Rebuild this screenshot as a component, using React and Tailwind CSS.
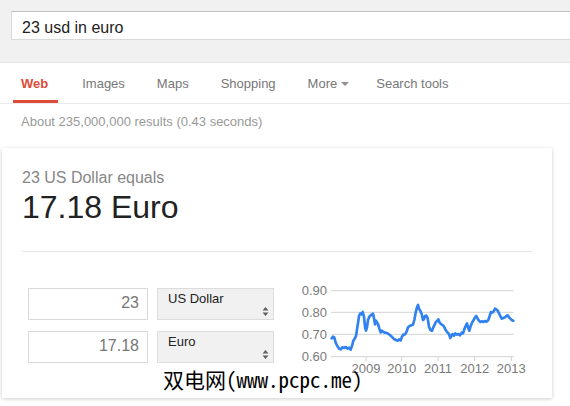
import React from "react";

const PTS =
  "140,205 144,200 148,203 152,218 157,228 162,236 167,238 172,232 177,234 182,231 187,236 192,233 197,239 201,228 205,212 209,206 213,198 216,178 219,160 222,138 226,130 230,133 233,126 237,140 240,170 243,182 246,172 249,150 253,140 257,136 261,133 264,131 267,145 270,163 273,152 276,158 279,162 283,175 287,187 291,182 295,186 300,188 306,189 312,193 318,198 323,203 328,208 333,210 338,212 343,208 347,211 351,200 355,194 360,193 365,185 369,172 374,168 379,166 384,164 388,150 392,128 396,112 399,105 402,116 406,122 410,132 414,150 417,147 420,138 424,137 428,145 432,170 436,180 441,182 445,172 449,164 452,157 456,153 460,148 464,158 468,162 472,165 476,168 480,176 484,183 488,188 492,192 496,204 499,198 503,192 507,197 511,190 515,194 520,192 525,196 530,188 534,190 538,178 542,168 546,160 550,175 553,182 557,168 561,158 566,150 570,142 574,138 578,146 582,152 586,156 590,154 595,156 600,153 605,155 610,150 614,138 618,126 622,128 626,124 630,116 634,118 638,122 642,130 646,138 650,146 655,144 660,142 664,138 668,136 672,142 676,146 680,150 685,152";

function Chart() {
  const grid = [
    { y: 62, l: "0.90" },
    { y: 127, l: "0.80" },
    { y: 193, l: "0.70" },
    { y: 260, l: "0.60" },
  ];
  const years = [
    { x: 243, l: "2009" },
    { x: 350, l: "2010" },
    { x: 459, l: "2011" },
    { x: 569, l: "2012" },
    { x: 679, l: "2013" },
  ];
  return (
    <svg
      width="232"
      height="100"
      viewBox="39 30 696 300"
      className="ml-[24px] shrink-0"
    >
      {grid.map((g) => (
        <g key={g.l}>
          <line x1="138" x2="686" y1={g.y} y2={g.y} stroke="#d4d4d4" strokeWidth="3" />
          <text
            x="126"
            y={g.y + 14}
            textAnchor="end"
            fontSize="39"
            fill="#7a7a7a"
            fontFamily="Liberation Sans, Arial, sans-serif"
          >
            {g.l}
          </text>
        </g>
      ))}
      {years.map((y) => (
        <g key={y.l}>
          <line x1={y.x} x2={y.x} y1="260" y2="273" stroke="#cfcfcf" strokeWidth="3" />
          <text
            x={y.x}
            y="309"
            textAnchor="middle"
            fontSize="39"
            fill="#7a7a7a"
            fontFamily="Liberation Sans, Arial, sans-serif"
          >
            {y.l}
          </text>
        </g>
      ))}
      <polyline
        points={PTS}
        fill="none"
        stroke="#3182f0"
        strokeWidth="8"
        strokeLinejoin="round"
        strokeLinecap="round"
      />
    </svg>
  );
}

function SelectArrows() {
  return (
    <svg width="7" height="9" viewBox="0 0 7 9" className="absolute right-[4px] top-[18px]">
      <polygon points="0.5,3.5 3.5,0 6.5,3.5" fill="#5f5f5f" />
      <polygon points="0.5,5.5 6.5,5.5 3.5,9" fill="#5f5f5f" />
    </svg>
  );
}

function ConvRow({ value, unit }) {
  return (
    <div className="flex gap-[9px]">
      <div className="w-[120px] h-[32px] border border-[#d9d9d9] bg-white flex items-center justify-end pr-[8px] pb-[2px] text-[16px] text-[#777]">
        {value}
      </div>
      <div className="relative w-[117px] h-[32px] border border-[#dcdcdc] bg-[#f1f1f1] pl-[10px] pt-[2px] text-[13px] leading-[15px] text-[#222]">
        {unit}
        <SelectArrows />
      </div>
    </div>
  );
}

export default function App() {
  const tabs = ["Images", "Maps", "Shopping"];
  return (
    <div className="relative w-[570px] h-[406px] overflow-hidden bg-white font-['Liberation_Sans',Arial,sans-serif]">
      {/* header */}
      <div className="h-[63px] bg-[#f1f1f1] border-b border-[#e5e5e5] pt-[11px] pl-[11px]">
        <div className="h-[29px] w-[600px] bg-white border border-[#d9d9d9] border-t-[#c0c0c0] pl-[10px] pt-[7px] text-[16px] leading-[18px] text-[#222]">
          23 usd in euro
        </div>
      </div>

      {/* tabs */}
      <div className="h-[41px] border-b border-[#ebebeb] flex gap-4 pl-[13px] text-[13px] leading-[15px] text-[#777]">
        <div className="relative h-full pl-2 pr-[10px] pt-[13px] font-bold text-[#dd4b39]">
          Web
          <div className="absolute left-0 right-0 bottom-0 h-[3px] bg-[#dd4b39]" />
        </div>
        {tabs.map((t) => (
          <div key={t} className="h-full px-2 pt-[13px]">
            {t}
          </div>
        ))}
        <div className="h-full pl-2 pr-[3px] pt-[13px] flex items-start">
          More
          <svg width="8" height="4" viewBox="0 0 8 4" className="ml-[4px] mt-[6px]">
            <polygon points="0,0 8,0 4,4" fill="#909090" />
          </svg>
        </div>
        <div className="h-full px-2 pt-[13px]">Search tools</div>
      </div>

      {/* stats */}
      <div className="mt-[10px] pl-[21px] text-[13px] leading-[15px] text-[#999]">
        About 235,000,000 results (0.43 seconds)
      </div>

      {/* card */}
      <div className="mt-[19px] ml-[2px] w-[550px] bg-white shadow-[0_1px_4px_rgba(0,0,0,0.2)] pt-[20px] px-[20px] pb-[18px]">
        <div className="text-[16px] leading-[20px] text-[#878787]">23 US Dollar equals</div>
        <div className="text-[32px] leading-[38px] text-[#222]">17.18 Euro</div>
        <div className="mt-[25px] h-px bg-[#e5e5e5]" />
        <div className="mt-[28px] flex">
          <div className="pl-[6px] pt-[8px] flex flex-col gap-[11px]">
            <ConvRow value="23" unit="US Dollar" />
            <ConvRow value="17.18" unit="Euro" />
          </div>
          <Chart />
        </div>
      </div>

      {/* watermark */}
      <div className="absolute left-[163px] top-[367px] text-[21px] leading-[24px] text-black font-['Noto_Sans_Mono_CJK_SC','Noto_Sans_CJK_SC',monospace]">
        双电网(www.pcpc.me)
      </div>
    </div>
  );
}
